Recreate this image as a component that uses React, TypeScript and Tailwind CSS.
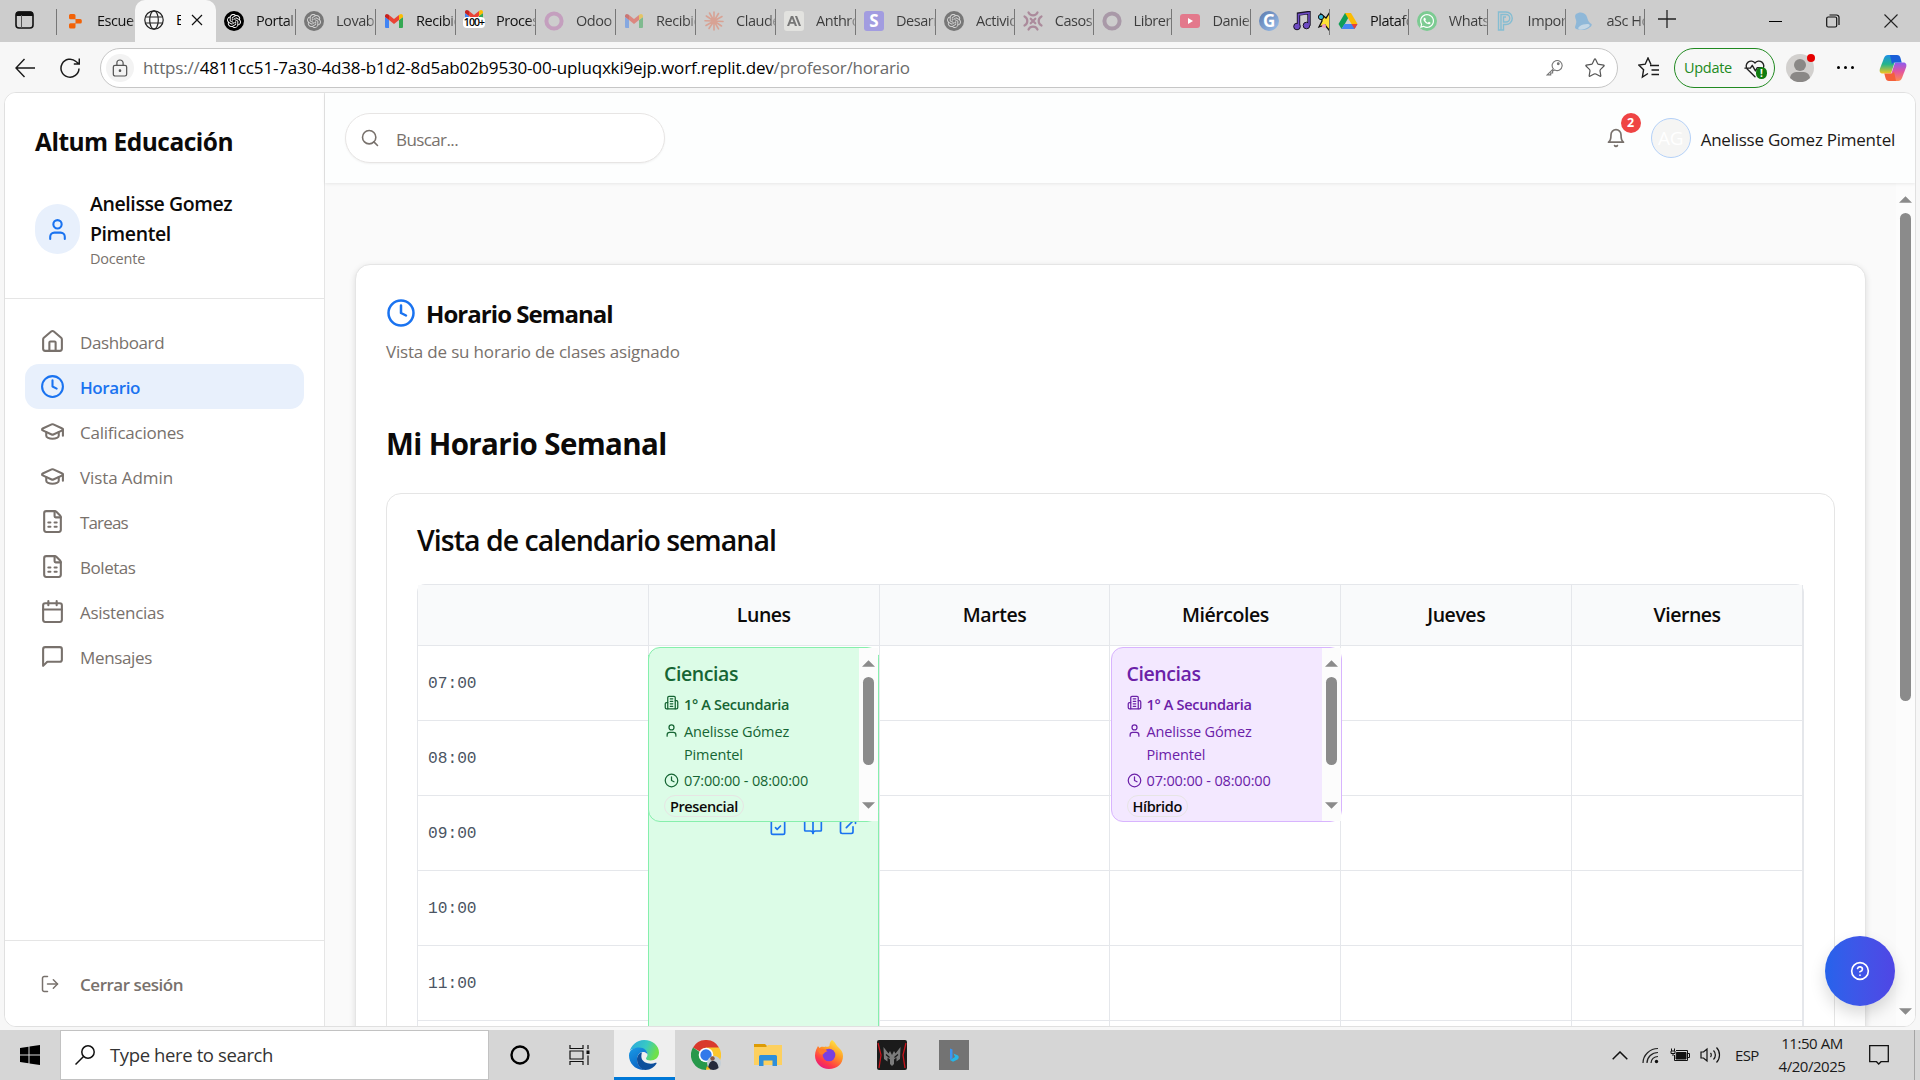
import React from "react";
import { Clock, GraduationCap, FileSpreadsheet, Calendar, LogOut, User, BookOpen, ExternalLink, ClipboardCheck, Search, Star } from "lucide-react";
import { SiOpenai, SiAnthropic } from "react-icons/si";
import { FaWhatsapp } from "react-icons/fa";

type Kids = { children?: React.ReactNode };

function Line({ children, className = "size-5", sw = 2 }: Kids & { className?: string; sw?: number }) {
  return (
    <svg viewBox="0 0 24 24" fill="none" stroke="currentColor" strokeWidth={sw} strokeLinecap="round" strokeLinejoin="round" className={className + " shrink-0"}>
      {children}
    </svg>
  );
}

const House = () => (
  <Line className="size-[25px]">
    <path d="M15 21v-8a1 1 0 0 0-1-1h-4a1 1 0 0 0-1 1v8" />
    <path d="M3 10a2 2 0 0 1 .709-1.528l7-5.999a2 2 0 0 1 2.582 0l7 5.999A2 2 0 0 1 21 10v9a2 2 0 0 1-2 2H5a2 2 0 0 1-2-2z" />
  </Line>
);
const Message = () => (
  <Line className="size-[25px]">
    <path d="M21 15a2 2 0 0 1-2 2H7l-4 4V5a2 2 0 0 1 2-2h14a2 2 0 0 1 2 2z" />
  </Line>
);
const Building = () => (
  <Line className="size-[15px]">
    <path d="M6 22V4a2 2 0 0 1 2-2h8a2 2 0 0 1 2 2v18Z" />
    <path d="M6 12H4a2 2 0 0 0-2 2v6a2 2 0 0 0 2 2h2M18 9h2a2 2 0 0 1 2 2v9a2 2 0 0 1-2 2h-2M10 6h4M10 10h4M10 14h4M10 18h4" />
  </Line>
);

/* ---------- favicons ---------- */
const Gmail = () => (
  <svg viewBox="0 0 20 20" className="size-5">
    <path d="M1 16V6l4 3v8H2a1 1 0 0 1-1-1z" fill="#4285f4" />
    <path d="M15 17V9l4-3v10a1 1 0 0 1-1 1z" fill="#34a853" />
    <path d="M5 9V4l5 4 5-4v5l-5 4z" fill="#ea4335" />
    <path d="M1 6V5c0-2 2-2.700 3.400-1.500L5 4v5z" fill="#c5221f" />
    <path d="M19 6V5c0-2-2-2.700-3.400-1.500L15 4v5z" fill="#fbbc04" />
  </svg>
);
const GmailCount = () => (
  <div className="relative size-5">
    <div className="-mt-1"><Gmail /></div>
    <span className="absolute -left-px top-2.5 h-[11px] w-[22px] rounded-sm bg-white text-center text-[10.5px] font-semibold leading-[11px] tracking-[-0.9px] text-black">100+</span>
  </div>
);
const Replit = () => (
  <svg viewBox="0 0 20 20" className="size-5">
    <path d="M4 4.500a1.500 1.500 0 0 1 1.500-1.500H9a1.500 1.500 0 0 1 1.500 1.500v3.800H5.500A1.500 1.500 0 0 1 4 6.800zM10.500 8h4.800A1.500 1.500 0 0 1 16.800 9.500v1.600a1.500 1.500 0 0 1-1.500 1.500h-4.800zM4 13.700a1.500 1.500 0 0 1 1.500-1.500h5v3.700A1.500 1.500 0 0 1 9 17.400H5.500A1.500 1.500 0 0 1 4 15.900z" fill="#f26207" />
  </svg>
);
const Openai = ({ dark = false }: { dark?: boolean }) => (
  <div className={"grid size-5 place-items-center rounded-full text-white " + (dark ? "bg-black" : "bg-[#777]")}>
    <SiOpenai className={"size-3.5 " + (dark ? "" : "text-[#d6d6d6]")} />
  </div>
);
const Ring = ({ c }: { c: string }) => (
  <svg viewBox="0 0 20 20" className="size-5"><circle cx="10" cy="10" r="7.600" fill="none" stroke={c} strokeWidth="4" /></svg>
);
const Burst = () => (
  <svg viewBox="0 0 20 20" className="size-5" stroke="#d8a294" strokeWidth="1.600" strokeLinecap="round">
    <path d="M10 10V1M10 10l4.500-7.500M10 10l8-4.500M10 10l9 0.500M10 10l7.500 5M10 10l4.500 7.800M10 10v9M10 10l-5 7.500M10 10l-8 4.500M10 10L1 9.700M10 10L2.300 5M10 10L5.500 2" />
  </svg>
);
const Anth = () => (
  <div className="grid size-5 place-items-center rounded-[3px] bg-[#e2e2df]"><SiAnthropic className="size-3.5 text-[#777]" /></div>
);
const LetterS = () => <div className="size-5 rounded-[3px] bg-[#a29ce0] text-center text-[17px] font-bold leading-5 text-white">S</div>;
const Knot = () => (
  <svg viewBox="0 0 20 20" className="size-5" fill="none" stroke="#ab8a9b" strokeWidth="2.200" strokeLinecap="round">
    <path d="M5.500 1.500a5 5 0 0 0 9 0M5.500 18.500a5 5 0 0 1 9 0M1.500 5.500a5 5 0 0 1 0 9M18.500 5.500a5 5 0 0 0 0 9M7.700 7.700l4.600 4.600M12.300 7.700l-4.600 4.600" />
  </svg>
);
const Youtube = () => (
  <svg viewBox="0 0 20 20" className="size-5"><rect y="3" width="20" height="14" rx="3" fill="#e3798c" /><path d="M8 7l5 3-5 3z" fill="#fff" /></svg>
);
const LetterG = () => <div className="size-5 shrink-0 rounded-full bg-linear-to-br from-[#5a79ad] to-[#9cc0ea] text-center text-[17px] font-bold leading-[19px] text-white">G</div>;
const Drive = () => (
  <svg viewBox="0 0 20 20" className="size-5">
    <path d="M7 2h6L6.500 13.500 3.500 18 .5 13z" fill="#0f9d58" />
    <path d="M7 2h6l6.500 11h-6z" fill="#fbbc04" />
    <path d="M6.500 13h13l-3 5h-13z" fill="#4285f4" />
    <path d="M13.500 13h6l-3 5z" fill="#ea4335" />
  </svg>
);
const Whats = () => <div className="grid size-5 place-items-center rounded-full bg-[#7ccb92] text-white"><FaWhatsapp className="size-4" /></div>;
const LetterP = () => (
  <svg viewBox="0 0 20 20" className="size-5" fill="none" stroke="#85bdd2" strokeWidth="1.400">
    <path d="M2.500 19V1H10a6 6 0 0 1 0 12.500H7.500V19zM5 19V3.500h5a3.600 3.600 0 0 1 0 7.500H7.500V6H10" />
  </svg>
);
const BellFav = () => (
  <svg viewBox="0 0 20 20" className="size-5"><path d="M2 3c3-2.500 8-2 10 1s1 6 5.500 9c1.500 2-4 5.500-8 6S1 18 1 16.500 3 12 2 9s-1.500-4 0-6z" fill="#8fb8d8" /><ellipse cx="10" cy="15.800" rx="6" ry="2.300" transform="rotate(-18 10 15.800)" fill="#c4d7e5" /></svg>
);
const Globe = () => (
  <svg viewBox="0 0 20 20" className="size-5 shrink-0" fill="none" stroke="#222" strokeWidth="1.200"><circle cx="10" cy="10" r="9.200" /><ellipse cx="10" cy="10" rx="4.300" ry="9.200" /><path d="M1.500 7h17M1.500 13h17" /></svg>
);

function Tab({ icon, label, wide = true, strong = false, sep = true }: { icon: React.ReactNode; label: React.ReactNode; wide?: boolean; strong?: boolean; sep?: boolean }) {
  return (
    <div className={"flex h-[26px] shrink-0 items-center gap-3 overflow-hidden pb-[3px] pl-2 " + (wide ? "w-20 " : "w-[78.8px] ") + (sep ? "border-r border-[#777]" : "")}>
      <div className="size-5 shrink-0">{icon}</div>
      <span className={"whitespace-nowrap bg-linear-to-r bg-clip-text text-[14.5px] tracking-[-0.45px] text-transparent to-[#bbb] " + (strong ? "from-[#111] from-[32px] to-[41px]" : "from-[#3c3c3c] from-[32px] to-[41px]")}>{label}</span>
    </div>
  );
}

function TabStrip() {
  return (
    <div className="flex h-[42px] shrink-0 bg-[#cdcdcd]">
      <div className="flex h-10 w-14 items-center pl-[15px]">
        <svg viewBox="0 0 20 20" className="size-5"><rect x="1" y="2" width="17" height="16" rx="3" fill="none" stroke="#111" strokeWidth="1.600" /><path d="M1 6V4a2.500 2.500 0 0 1 2.500-2.500h12A2.500 2.500 0 0 1 18 4v2z" fill="#111" /><path d="M6.500 5v13" stroke="#555" /></svg>
      </div>
      <div className="flex items-center pb-0.5 pt-1">
        <div className="h-[26px] w-px bg-[#777]" />
        <Tab icon={<Replit />} label="Escuela" strong sep={false} />
      </div>
      <div className="-ml-0.5 flex h-[42px] w-[81px] items-center rounded-t-[10px] bg-[#f7f7f7] pb-[3px] pl-[9px]">
        <Globe />
        <span className="ml-3 w-[5px] overflow-hidden text-[14.5px] text-black">E</span>
        <svg viewBox="0 0 12 12" className="ml-2.5 size-3 shrink-0" stroke="#111" strokeWidth="1.200"><path d="M1 1l10 10M11 1L1 11" /></svg>
      </div>
      <div className="flex items-center pb-0.5 pt-1">
        <Tab icon={<Openai dark />} label="Portal" strong />
        <Tab icon={<Openai />} label="Lovable" />
        <Tab icon={<Gmail />} label="Recibidos" strong />
        <Tab icon={<GmailCount />} label="Procesos" strong />
        <Tab icon={<Ring c="#c49fbe" />} label="Odoo" />
        <Tab icon={<div className="opacity-50"><Gmail /></div>} label="Recibidos" />
        <Tab icon={<Burst />} label="Claude" />
        <Tab icon={<Anth />} label="Anthropic" />
        <Tab icon={<LetterS />} label="Desarrollo" />
        <Tab wide={false} icon={<Openai />} label="Actividad" />
        <Tab wide={false} icon={<Knot />} label="Casos de" />
        <Tab wide={false} icon={<Ring c="#a999a8" />} label="Librería" />
        <Tab wide={false} icon={<Youtube />} label="Daniel" />
        <div className="flex h-[26px] w-[78.8px] shrink-0 items-center overflow-hidden border-r border-[#777] pb-[3px] pl-2">
          <LetterG />
          <svg viewBox="0 0 18 20" className="ml-3.5 h-5 w-[18px] shrink-0"><path d="M5.500 15.500V3l10.500-1.500v13" fill="none" stroke="#181225" strokeWidth="3.400" /><circle cx="4" cy="15.500" r="3.300" fill="#6d4bc3" stroke="#181225" /><circle cx="13.500" cy="14.500" r="3.300" fill="#6d4bc3" stroke="#181225" /><path d="M5.500 15V3.500L16 2v12" fill="none" stroke="#6d4bc3" strokeWidth="1.600" /></svg>
          <svg viewBox="0 0 20 20" className="ml-1.5 size-5 shrink-0"><path d="M4 3l5 4 4-6 2 6 4 4-5 2-2 6-4-5-6 2 3-6z" fill="#ffe034" stroke="#111" strokeWidth="1.300" /><circle cx="4" cy="6" r="2.600" fill="#35b6d9" stroke="#111" /><circle cx="7" cy="15" r="2" fill="#f29bc0" /></svg>
        </div>
        <Tab wide={false} icon={<Drive />} label="Plataforma" strong />
        <Tab wide={false} icon={<Whats />} label="WhatsApp" />
        <Tab wide={false} icon={<LetterP />} label="Importar" />
        <Tab wide={false} icon={<BellFav />} label="aSc Horarios" />
      </div>
      <svg viewBox="0 0 18 18" className="ml-[13px] mt-[10px] size-[18px] shrink-0" stroke="#222" strokeWidth="1.300"><path d="M9 0v18M0 9h18" /></svg>
      <div className="ml-auto flex h-[42px] items-center pr-[22px]">
        <div className="h-px w-[13px] bg-black" />
        <svg viewBox="0 0 14 14" className="ml-11 size-3.5" fill="none" stroke="#111" strokeWidth="1.200"><rect x=".7" y="3" width="10" height="10" rx="1.500" /><path d="M3.500 1h7A2.500 2.500 0 0 1 13 3.500V11" /></svg>
        <svg viewBox="0 0 14 14" className="ml-11 size-3.5" stroke="#222" strokeWidth="1.100"><path d="M.5.5l13 13M13.500.5l-13 13" /></svg>
      </div>
    </div>
  );
}

function Toolbar() {
  return (
    <div className="flex h-[50px] shrink-0 items-center bg-[#f7f7f7] pl-[15px] pr-[13px] pt-px">
      <svg viewBox="0 0 20 20" className="size-5 shrink-0" fill="none" stroke="#1a1a1a" strokeWidth="1.400"><path d="M20 10H1M9.500 1L1 10l8.500 9" /></svg>
      <svg viewBox="0 0 20 20" className="ml-[25px] size-5 shrink-0" fill="none" stroke="#1a1a1a" strokeWidth="1.500"><path d="M19 10.500A9 9 0 1 1 16 3.500l3 2.500M19.300.5V6h-5.500" /></svg>
      <div className="ml-5 flex h-10 w-[1518px] shrink-0 items-center rounded-full border border-[#c6c6c6] bg-white">
        <div className="ml-[5px] grid size-7 shrink-0 place-items-center rounded-full bg-[#f3f3f3]">
          <svg viewBox="0 0 18 20" className="h-[18px] w-4" fill="none" stroke="#555" strokeWidth="1.400"><rect x="1.500" y="7" width="15" height="12" rx="2" /><path d="M5.500 7V4.500a3.500 3.500 0 0 1 7 0V7" /><circle cx="9" cy="13" r=".8" fill="#555" /></svg>
        </div>
        <div className="ml-[9px] whitespace-nowrap text-[17px] tracking-[-0.165px] text-[#6a6a6a]">
          https://<span className="text-black">4811cc51-7a30-4d38-b1d2-8d5ab02b9530-00-upluqxki9ejp.worf.replit.dev</span>/profesor/horario
        </div>
        <svg viewBox="0 0 18 18" className="ml-auto size-[17px] shrink-0" fill="none" stroke="#777" strokeWidth="1.200"><path d="M7.800 10.400L1.200 16.800H5v-2h2v-2l2.300-1.200A5.300 5.300 0 1 0 7.800 10.400z" /><circle cx="13" cy="5" r=".9" fill="#777" /></svg>
        <Star className="ml-[21px] mr-[11px] size-[22px] shrink-0 text-[#555]" strokeWidth={1.300} />
      </div>
      <svg viewBox="0 0 22 22" className="ml-5 size-[22px] shrink-0" fill="none" stroke="#1a1a1a" strokeWidth="1.400"><path d="M13 7.500L10 1 7.200 7.200.8 8l4.800 4.700L4.400 20 10 16.500M12 8.500h9M13.500 13H21M13.500 17.500H21" /></svg>
      <div className="ml-[14px] flex h-10 w-[101px] shrink-0 items-center rounded-full border-[1.5px] border-[#218a21] pl-[9px] text-[14.5px] tracking-[-0.3px] text-[#218a21]">
        Update
        <div className="relative ml-3 h-5 w-[22px]">
          <Line className="size-[22px] text-[#222]" sw={1.5}><path d="M12 20.500L3.500 12a5.300 5.300 0 0 1 8.500-6.500A5.300 5.300 0 0 1 20.500 12M1 11h6l2-3 3.500 6 2-3.500H19" /></Line>
          <span className="absolute left-3 top-[9px] h-3 w-[11px] rounded-full bg-[#107c10] text-center text-[10px] font-bold leading-3 text-white">!</span>
        </div>
      </div>
      <div className="relative ml-[11px] size-7 shrink-0">
        <svg viewBox="0 0 28 28" className="size-7"><circle cx="14" cy="14" r="14" fill="#d2d0ce" /><circle cx="14" cy="11" r="6" fill="#8a8886" /><path d="M4 24c1-6 5-6 10-6s9 0 10 6a14 14 0 0 1-20 0z" fill="#8a8886" /></svg>
        <span className="absolute left-[21px] top-0 size-2 rounded-full bg-[#e60000]" />
      </div>
      <div className="ml-[23px] flex gap-1">
        <i className="size-[3px] rounded-full bg-black" /><i className="size-[3px] rounded-full bg-black" /><i className="size-[3px] rounded-full bg-black" />
      </div>
      <svg viewBox="0 0 28 28" className="ml-auto size-7 shrink-0">
        <defs>
          <linearGradient id="cpA" x1="0" y1="0" x2="0" y2="1"><stop offset="0" stopColor="#1d8fe8" /><stop offset=".5" stopColor="#25b58b" /><stop offset="1" stopColor="#f5c51f" /></linearGradient>
          <linearGradient id="cpB" x1="0" y1="0" x2="0" y2="1"><stop offset="0" stopColor="#8d5cf0" /><stop offset=".5" stopColor="#e3569e" /><stop offset="1" stopColor="#ff8a4f" /></linearGradient>
        </defs>
        <path d="M9 1h9l-6 18.500H4c-3 0-4-2-3-5L5 4c.8-2 2-3 4-3z" fill="url(#cpA)" />
        <path d="M19 27h-9l6-18.500h8c3 0 4 2 3 5L23 24c-.8 2-2 3-4 3z" fill="url(#cpB)" />
        <path d="M11 1h7c2 0 3 1 3.500 3l1.200 4.500H16c-1.500 0-2.500.6-3 2z" fill="#1a5fd8" />
        <path d="M17 27h-7c-2 0-3-1-3.500-3l-1.200-4.500H12c1.500 0 2.500-.6 3-2z" fill="#f4603a" />
      </svg>
    </div>
  );
}

/* ---------- sidebar ---------- */
const nav: { label: string; icon: React.ReactNode; active?: boolean; track: string }[] = [
  { label: "Dashboard", icon: <House />, track: "tracking-[-0.4px]" },
  { label: "Horario", icon: <Clock className="size-[25px]" />, active: true, track: "tracking-[-0.4px]" },
  { label: "Calificaciones", icon: <GraduationCap className="size-[25px]" />, track: "tracking-[-0.22px]" },
  { label: "Vista Admin", icon: <GraduationCap className="size-[25px]" />, track: "tracking-[-0.1px]" },
  { label: "Tareas", icon: <FileSpreadsheet className="size-[25px]" />, track: "tracking-[-0.85px]" },
  { label: "Boletas", icon: <FileSpreadsheet className="size-[25px]" />, track: "tracking-[-0.45px]" },
  { label: "Asistencias", icon: <Calendar className="size-[25px]" />, track: "tracking-[-0.3px]" },
  { label: "Mensajes", icon: <Message />, track: "tracking-[-0.34px]" },
];

function Sidebar() {
  return (
    <aside className="flex w-80 shrink-0 flex-col border-r border-[#e5e5e5] bg-white">
      <div className="border-b border-[#e5e5e5] px-[30px] pb-[29px] pt-[34px]">
        <h1 className="text-[24.5px] font-bold leading-[30px] tracking-[-0.5px] text-[#0c0a09]">Altum Educación</h1>
        <div className="mt-8 flex items-center gap-2.5">
          <div className="grid h-[50px] w-[45px] shrink-0 place-items-center rounded-full bg-[#e8f0fc] text-[#1a73f0]">
            <User className="size-[25px]" />
          </div>
          <div>
            <p className="w-[150px] text-[19.5px] font-semibold leading-[30px] tracking-[-0.4px] text-[#0c0a09]">Anelisse Gomez Pimentel</p>
            <p className="text-[14.5px] leading-5 tracking-[-0.2px] text-[#78716c]">Docente</p>
          </div>
        </div>
      </div>
      <nav className="flex flex-col px-5 pt-5">
        {nav.map((n) => (
          <div key={n.label} className={"flex h-[45px] items-center gap-[15px] rounded-[14px] pl-[15px] text-[17px] " + n.track + (n.active ? " bg-[#e8f0fc] font-semibold text-[#1a73f0]" : " text-[#78716c]")}>
            {n.icon}
            <span className="pt-[3px]">{n.label}</span>
          </div>
        ))}
      </nav>
      <div className="mt-auto flex h-[86px] items-center gap-5 border-t border-[#e5e5e5] pl-[35px] text-[17px] font-semibold tracking-[-0.47px] text-[#78716c]">
        <LogOut className="size-5" strokeWidth={1.8} />
        <span className="pt-[3px]">Cerrar sesión</span>
      </div>
    </aside>
  );
}

function TopBar() {
  return (
    <header className="z-10 flex h-[90px] shrink-0 items-center justify-between bg-[#fdfefe] pl-5 pr-5 shadow-[0_1px_3px_rgba(0,0,0,0.08)]">
      <div className="flex h-[50px] w-80 items-center gap-4 rounded-full border border-[#e7e5e4] bg-white pl-[14px] text-[17px] tracking-[-0.6px] text-[#78716c] shadow-[0_1px_2px_rgba(0,0,0,0.05)]">
        <Search className="size-5" strokeWidth={1.900} />
        <span className="pt-1">Buscar...</span>
      </div>
      <div className="flex items-center">
        <div className="relative mr-[25px] text-[#78716c]">
          <Line className="size-5"><path d="M6 8a6 6 0 0 1 12 0c0 7 3 9 3 9H3s3-2 3-9" /><path d="M10.300 21a1.940 1.940 0 0 0 3.400 0" /></Line>
          <span className="absolute -top-[15px] left-[15px] size-5 rounded-full bg-[#ef4444] text-center text-[12.5px] font-bold leading-5 text-white">2</span>
        </div>
        <div className="grid size-10 place-items-center rounded-full border border-[#b4d1f8] bg-[#f5f5f4] text-[19px] font-medium tracking-[-0.3px] text-white">AG</div>
        <span className="ml-2.5 pt-1 text-[17px] tracking-[-0.24px] text-[#1c1917]">Anelisse Gomez Pimentel</span>
      </div>
    </header>
  );
}

const Up = () => <svg viewBox="0 0 14 7" className="h-[7px] w-[13px]"><path d="M0 7l7-7 7 7z" fill="#8b8b8b" /></svg>;
const Down = () => <svg viewBox="0 0 14 7" className="h-[7px] w-[13px]"><path d="M0 0l7 7 7-7z" fill="#8b8b8b" /></svg>;

/* ---------- weekly calendar ---------- */
const days = ["", "Lunes", "Martes", "Miércoles", "Jueves", "Viernes"];
const hours = ["07:00", "08:00", "09:00", "10:00", "11:00", "12:00"];

function EventCard({ mode, tone }: { mode: string; tone: string }) {
  return (
    <div className={"flex h-[175px] w-[231px] rounded-[12px] border " + tone}>
      <div className="flex-1 pl-[15px] pt-[13px]">
        <h3 className="text-[19.5px] font-semibold leading-[26px] tracking-[-0.42px]">Ciencias</h3>
        <div className="mt-[7px] flex gap-[5px] text-[14.5px] font-semibold leading-[22px] tracking-[-0.31px]">
          <div className="pt-px"><Building /></div>1° A Secundaria
        </div>
        <div className="mt-1 flex gap-[5px] text-[14.5px] leading-[23px] tracking-[-0.13px]">
          <User className="mt-[3px] size-[15px] shrink-0" /><p className="w-[120px]">Anelisse Gómez Pimentel</p>
        </div>
        <div className="mt-1 flex gap-[5px] text-[14.5px] leading-[22px] tracking-[-0.15px]">
          <Clock className="mt-[3px] size-[15px] shrink-0" />07:00:00 - 08:00:00
        </div>
        <span className="mt-[3px] block h-[22px] w-fit rounded-full border border-[#e7e5e4] px-[5px] text-[14.5px] font-semibold leading-[22px] tracking-[-0.4px] text-[#0c0a09]">{mode}</span>
      </div>
      <div className="flex w-[19px] shrink-0 flex-col items-center bg-[#fcfcfc] pt-3">
        <Up />
        <div className="mt-2.5 h-[88px] w-[11px] rounded-full bg-[#8b8b8b]" />
        <div className="mt-[37px] flex"><Down /></div>
      </div>
    </div>
  );
}

function Week() {
  return (
    <div className="relative mt-6 rounded-t-[8px] border-x border-t border-[#e5e7eb]">
      <div className="grid grid-cols-6">
        {days.map((d, i) => (
          <div key={i} className="h-[61px] border-b border-r border-[#e5e7eb] bg-[#f9fafb] text-center text-[19.500px] font-semibold leading-[60px] tracking-[-0.45px] text-[#0c0a09]">{d}</div>
        ))}
        {hours.map((h) =>
          days.map((d, i) => (
            <div key={h + i} className="h-[75px] border-b border-r border-[#e5e7eb] pl-2.5 font-['Liberation_Mono',monospace] text-[16.200px] leading-[76px] text-[#4b5563]">{i === 0 ? h : ""}</div>
          ))
        )}
      </div>
      <div className="absolute -bottom-5 left-[230px] top-[70px] w-[231px] border-x border-[#86efac] bg-[#dcfce7]">
        <div className="mt-[161px] flex gap-[15px] pl-[119px] text-[#1a73f0]">
          <ClipboardCheck className="size-5" /><BookOpen className="size-5" /><ExternalLink className="size-5" />
        </div>
      </div>
      <div className="absolute left-[230px] top-[62px]"><EventCard mode="Presencial" tone="border-[#86efac] bg-[#dcfce7] text-[#166534]" /></div>
      <div className="absolute left-[692.5px] top-[62px]"><EventCard mode="Híbrido" tone="border-[#d8b4fe] bg-[#f3e8ff] text-[#6b21a8]" /></div>
    </div>
  );
}

function Content() {
  return (
    <div className="flex min-h-0 flex-1 bg-[#fafafa]">
      <main className="min-w-0 flex-1 overflow-hidden px-[30px] pt-[81px]">
        <section className="rounded-[15px] border border-[#e5e5e5] bg-white px-[30px] pt-[33px] shadow-[0_2px_6px_rgba(0,0,0,0.12)]">
          <div className="flex h-[30px] items-center gap-2.5">
            <Clock className="size-[30px] text-[#1a73f0]" />
            <h2 className="pt-0.5 text-[24px] font-bold leading-[30px] tracking-[-0.95px] text-[#0c0a09]">Horario Semanal</h2>
          </div>
          <p className="mt-[11px] text-[17px] leading-[26px] tracking-[-0.18px] text-[#78716c]">Vista de su horario de clases asignado</p>
          <h2 className="mt-[59px] text-[29.5px] font-bold leading-10 tracking-[-0.6px] text-[#0c0a09]">Mi Horario Semanal</h2>
          <div className="mt-[29px] h-[700px] rounded-[15px] border border-[#e5e5e5] pl-[30px] pr-[30px] pt-[26px]">
            <h3 className="text-[28.500px] font-semibold leading-10 tracking-[-0.98px] text-[#0c0a09]">Vista de calendario semanal</h3>
            <Week />
          </div>
        </section>
      </main>
      <div className="flex w-[19px] shrink-0 flex-col items-center bg-[#fcfcfc] pb-[11px] pt-[13px]">
        <Up />
        <div className="mt-2.5 h-[488px] w-[11px] rounded-full bg-[#8b8b8b]" />
        <div className="mt-auto flex"><Down /></div>
      </div>
    </div>
  );
}

/* ---------- taskbar ---------- */
const Edge = () => (
  <svg viewBox="0 0 30 30" className="size-[30px]">
    <defs>
      <linearGradient id="edA" x1="0" y1="0" x2="1" y2="0.300"><stop offset="0" stopColor="#2aa5e0" /><stop offset=".6" stopColor="#38c9c4" /><stop offset="1" stopColor="#6fe04a" /></linearGradient>
      <linearGradient id="edB" x1="0" y1="0" x2="0.500" y2="1"><stop offset="0" stopColor="#1a9be6" /><stop offset="1" stopColor="#0a63c4" /></linearGradient>
    </defs>
    <path d="M.5 12C2 5 8 0 15 0c9 0 15 6 15 12.500 0 5-4 8-8.500 8-3 0-4.500-1-4.500-2s1.500-1.500 1.500-4c0-3-3-6-8-6S1 9 .5 12z" fill="url(#edA)" />
    <path d="M0 15.500C0 10 5 7.500 10 7.500c5.500 0 8.500 3.500 8.500 7-1-2-3-2.500-4.500-2.500-3 0-6 3-6 7.500 0 5 3.500 9.500 8 10.500C6.500 30.500 0 23.500 0 15.500z" fill="url(#edB)" />
    <path d="M13 12.500c-3 .5-5 3.500-5 7C8 25 12 30 16.500 30c5 0 9-3 11-6.500.4-.8-.3-1-1-.7-5 2-13 .5-14-5-.3-2 0-4 .5-5.300z" fill="#0d4f9c" />
  </svg>
);
const Chrome = () => (
  <svg viewBox="0 0 30 30" className="size-[30px]">
    <path d="M15 15L2 7.500A15 15 0 0 1 28 7.500z" fill="#d93a2d" />
    <path d="M15 15h-2L2 7.500A15 15 0 0 0 15 30l7-11z" fill="#27984b" />
    <path d="M15 7.500h13A15 15 0 0 1 15 30l7-12z" fill="#fcc72c" />
    <circle cx="15" cy="15" r="7.300" fill="#fff" /><circle cx="15" cy="15" r="5.700" fill="#3178ea" />
    <circle cx="23" cy="23" r="7" fill="#c3ced6" /><path d="M17 28c1-6 3-7 5-7s5 1 5.500 7a8 8 0 0 1-10.500 0z" fill="#232a3c" /><circle cx="21.500" cy="18.500" r="2.200" fill="#8a5b44" /><path d="M16 26l3 3h-4z" fill="#f2b21a" />
  </svg>
);
const Folder = () => (
  <svg viewBox="0 0 28 24" className="h-6 w-7"><path d="M0 1h11l2 2v4H0z" fill="#dd9b04" /><path d="M0 4h12l2-2h14v20H0z" fill="#fdd05f" /><path d="M5 23V13.500A1.500 1.500 0 0 1 6.500 12h15a1.500 1.500 0 0 1 1.500 1.500V23h-4.500v-5.500h-9V23z" fill="#2e8fda" /></svg>
);
const Firefox = () => (
  <svg viewBox="0 0 30 30" className="size-[30px]">
    <defs>
      <linearGradient id="ffA" x1=".8" y1="0" x2=".2" y2="1"><stop offset="0" stopColor="#fff04a" /><stop offset=".4" stopColor="#ff9a24" /><stop offset=".75" stopColor="#ff3b47" /><stop offset="1" stopColor="#e0168c" /></linearGradient>
    </defs>
    <path d="M18 0c4 3 4 5 6 7 3 2.500 5 5 5 9 0 8-6 13-14 13S1 23 1 15.500C1 11 3 8 4 6c.5 1 1 1.500 1 2.500C6 7 8 6.500 10 7c3-.5 5.500 0 5.500-1.500S16 1.500 18 0z" fill="url(#ffA)" />
    <circle cx="15" cy="15" r="6.300" fill="#7a3fe0" />
    <path d="M4 6.500l3 3c3-1 5 0 6.500 2-3 0-3 2.500-5 3-3 .5-5-3-4.500-8z" fill="#ff7a2b" />
  </svg>
);
const Predator = () => (
  <svg viewBox="0 0 30 30" className="size-[30px]">
    <rect width="30" height="30" rx="2" fill="#1b1b1b" />
    <path d="M1 3l3 12-2 13M29 3l-3 12 2 13" stroke="#c8141c" strokeWidth="1.300" fill="none" />
    <path d="M6.500 7l5 6.500L13 11l2 4 2-4 1.500 2.500 5-6.500-.5 12-3.500 2.500v-4L17 19.500V24l-2 2-2-2v-4.500l-2.500-2v4L7 19z" fill="#7c7c7c" />
    <path d="M9 14.500l3.500 3M21 14.500l-3.500 3" stroke="#1b1b1b" strokeWidth="1.300" />
  </svg>
);
const Bing = () => (
  <svg viewBox="0 0 30 30" className="size-[30px]"><rect width="30" height="30" fill="#737373" /><path d="M11 8.500l2.500 1v8.500L11 20z" fill="#3b96f5" /><path d="M11 20l5-3-1.500-3.500 4.500 2c1.300 1.500.8 3-.5 4l-4.500 2.300z" fill="#26b6e8" /></svg>
);

function Taskbar() {
  return (
    <footer className="flex h-[50px] shrink-0 items-center bg-[#d6d6d6]">
      <div className="flex w-[60px] pl-5">
        <svg viewBox="0 0 20 20" className="size-5"><path d="M0 3l8.500-1.200v7.700H0zM9.500 1.600L20 0v9.500H9.500zM0 10.500h8.500v7.700L0 17zM9.500 10.500H20V20L9.500 18.400z" /></svg>
      </div>
      <div className="flex h-[50px] w-[429px] items-center border border-[#c2c2c2] bg-white pl-3.5">
        <svg viewBox="0 0 20 20" className="size-5" fill="none" stroke="#111" strokeWidth="1.500"><circle cx="13" cy="7" r="6.200" /><path d="M8.500 11.500L.5 19.500" /></svg>
        <span className="ml-[15px] text-[18.5px] tracking-[-0.38px] text-[#333]">Type here to search</span>
      </div>
      <svg viewBox="0 0 20 20" className="ml-[21px] size-5"><circle cx="10" cy="10" r="8.500" fill="none" stroke="#000" strokeWidth="2.400" /></svg>
      <svg viewBox="0 0 22 20" className="ml-[39px] h-5 w-[22px]" fill="none" stroke="#111" strokeWidth="1.200"><path d="M1 0v3.500h13V0M1 20v-3.500h13V20M1 6h13v8H1zM19 0v4M19 10.500V20" /><path d="M17.500 5.500h3v3.500h-3z" fill="#111" stroke="none" /></svg>
      <div className="ml-[23px] flex h-[50px] w-[61px] items-center border-b-[3px] border-[#0078d7] bg-[#efefef] pl-[15px] pt-[3px]"><Edge /></div>
      <div className="ml-4 flex items-center">
        <Chrome />
        <div className="ml-[33px]"><Folder /></div>
        <div className="ml-8"><Firefox /></div>
        <div className="ml-[33px]"><Predator /></div>
        <div className="ml-8"><Bing /></div>
      </div>
      <div className="ml-auto flex items-center text-[15px] text-[#1a1a1a]">
        <svg viewBox="0 0 16 9" className="h-[9px] w-4" fill="none" stroke="#111" strokeWidth="1.500"><path d="M.7 8.300L8 1l7.300 7.300" /></svg>
        <svg viewBox="0 0 17 17" className="ml-[14px] size-[17px]" fill="none" stroke="#222" strokeWidth="1.200"><path d="M1 16C1 8 8 1.500 16 1.500M5 16C5 10 10 5.500 16 5.500M9 16c0-3.500 3-6.500 7-6.500" /><circle cx="14.500" cy="14.500" r="1.700" fill="#111" stroke="none" /></svg>
        <svg viewBox="0 0 20 14" className="ml-[11px] h-3.5 w-5" fill="none" stroke="#111"><path d="M6 2.500h11.500v10H4.500V7" /><path d="M6.500 4.500H16v6.500H6z" fill="#111" /><path d="M18 5.500h1.500v4H18" /><path d="M1 3h4v2.500H1zM1.500 3V.5M4.500 3V.5M3 5.500V8" /></svg>
        <svg viewBox="0 0 21 18" className="ml-2.5 h-[18px] w-[21px]" fill="none" stroke="#111" strokeWidth="1.200"><path d="M1 6h2.500L7 3v12l-3.500-3H1zM10.500 7c1 1 1 3 0 4M13.500 4.500c2.500 2.500 2.500 6.500 0 9M16.500 1.500c4 4 4 11 0 15" /></svg>
        <span className="ml-[14px] w-[25px] tracking-[-0.7px]">ESP</span>
        <div className="ml-[14px] w-[76px] text-center leading-[23px] tracking-[-0.45px]">11:50 AM<br />4/20/2025</div>
        <svg viewBox="0 0 20 20" className="ml-[19px] h-5 w-5" fill="none" stroke="#111" strokeWidth="1.300"><path d="M.7.7h18.600v16H12L9.700 19 7.500 16.700H.7z" /></svg>
        <div className="ml-[25px] mr-[5px] h-[50px] w-px bg-[#a5a5a5]" />
      </div>
    </footer>
  );
}

export default function App() {
  return (
    <div className="flex h-[1080px] w-[1920px] flex-col overflow-hidden bg-[#f7f7f7] font-['Open_Sans','Noto_Sans',sans-serif]">
      <TabStrip />
      <Toolbar />
      <div className="relative mb-[3px] ml-1 mr-1 flex min-h-0 flex-1 overflow-hidden rounded-[12px] border border-[#e0e0e0] bg-white">
        <Sidebar />
        <div className="flex min-w-0 flex-1 flex-col">
          <TopBar />
          <Content />
        </div>
        <div className="absolute bottom-5 right-5 grid size-[70px] place-items-center rounded-full bg-linear-to-r from-[#2563eb] to-[#4f46e5] text-white shadow-[0_8px_16px_rgba(0,0,0,0.15)]">
          <Line className="size-5"><circle cx="12" cy="12" r="10" /><path d="M9.090 9a3 3 0 0 1 5.830 1c0 2-3 3-3 3M12 17h.01" /></Line>
        </div>
      </div>
      <Taskbar />
    </div>
  );
}
